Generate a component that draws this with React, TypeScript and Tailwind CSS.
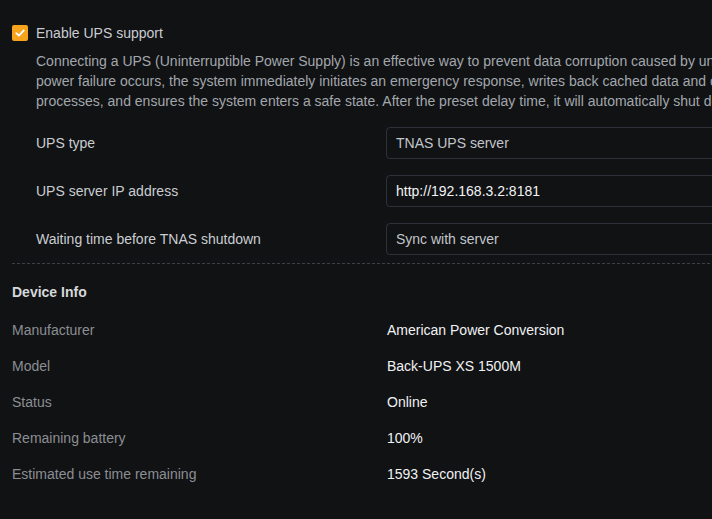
import { useState } from "react";

const DESCRIPTION_LINES = [
  "Connecting a UPS (Uninterruptible Power Supply) is an effective way to prevent data corruption caused by unexpected power outages. When a",
  "power failure occurs, the system immediately initiates an emergency response, writes back cached data and closes all running",
  "processes, and ensures the system enters a safe state. After the preset delay time, it will automatically shut down.",
];

const DEVICE_INFO = [
  { label: "Manufacturer", value: "American Power Conversion" },
  { label: "Model", value: "Back-UPS XS 1500M" },
  { label: "Status", value: "Online" },
  { label: "Remaining battery", value: "100%" },
  { label: "Estimated use time remaining", value: "1593 Second(s)" },
];

export default function App() {
  const [enabled, setEnabled] = useState(true);
  const [ip, setIp] = useState("http://192.168.3.2:8181");

  return (
    <div className="w-[712px] h-[519px] overflow-hidden bg-[#111214] font-['Liberation_Sans',Arial,sans-serif] text-[14px] leading-[20px]">
      <div className="w-[960px] pl-3 pt-[23px]">
        <label className="flex items-center gap-2 cursor-pointer">
          <button
            type="button"
            onClick={() => setEnabled(!enabled)}
            className={[
              "w-4 h-4 rounded-[2px] flex items-center justify-center",
              enabled ? "bg-[#f5a41c]" : "border border-[#4a4f57]",
            ].join(" ")}
          >
            {enabled ? (
              <svg width="12" height="12" viewBox="0 0 12 12" fill="none">
                <path
                  d="M2.3 6.2 L4.9 8.7 L9.8 3.4"
                  stroke="#fff"
                  strokeWidth="1.8"
                  strokeLinecap="round"
                  strokeLinejoin="round"
                />
              </svg>
            ) : null}
          </button>
          <span className="text-[#c9cdd2]">Enable UPS support</span>
        </label>

        <div className="pl-6 mt-2 text-[#a2a7ad]">
          {DESCRIPTION_LINES.map((line) => (
            <div key={line} className="whitespace-nowrap">
              {line}
            </div>
          ))}
        </div>

        <div className="pl-6 mt-4 flex flex-col gap-4">
          <FormRow label="UPS type">
            <div className="h-8 rounded-[4px] border border-[#2c313a] px-[9px] flex items-center text-[#c2c6cb]">
              TNAS UPS server
            </div>
          </FormRow>
          <FormRow label="UPS server IP address">
            <input
              value={ip}
              onChange={(e) => setIp(e.target.value)}
              className="w-full h-8 rounded-[4px] border border-[#2c313a] bg-transparent px-[9px] text-[#f2f3f5] outline-none"
            />
          </FormRow>
          <FormRow label="Waiting time before TNAS shutdown">
            <div className="h-8 rounded-[4px] border border-[#2c313a] px-[9px] flex items-center text-[#c2c6cb]">
              Sync with server
            </div>
          </FormRow>
        </div>

        <div className="mt-2 border-t border-dashed border-[#3b3f46]" />

        <div className="mt-[18px] font-bold text-[#d6d8db]">Device Info</div>

        <div className="mt-[18px] flex flex-col gap-4">
          {DEVICE_INFO.map((row) => (
            <div key={row.label} className="flex">
              <div className="w-[375px] text-[#8b8e93]">{row.label}</div>
              <div className="text-[#f0f1f3]">{row.value}</div>
            </div>
          ))}
        </div>
      </div>
    </div>
  );
}

function FormRow({
  label,
  children,
}: {
  label: string;
  children: React.ReactNode;
}) {
  return (
    <div className="flex items-center">
      <div className="w-[350px] text-[#c9cdd2]">{label}</div>
      <div className="flex-1">{children}</div>
    </div>
  );
}
